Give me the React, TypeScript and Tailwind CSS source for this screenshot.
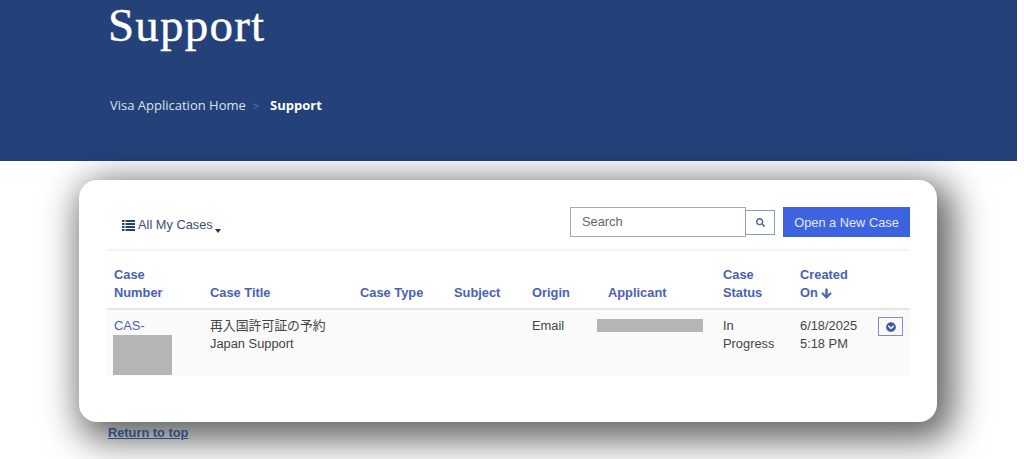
import { FaArrowDown, FaChevronCircleDown, FaSearch } from "react-icons/fa";

const sans = "font-['Liberation_Sans','Noto_Sans_CJK_JP',sans-serif]";

export default function App() {
  return (
    <div className={`w-[1024px] h-[459px] overflow-hidden bg-white ${sans}`}>
      <header className="w-[1017px] h-[161px] bg-[#24417a] pl-[108px] text-white">
        <h1 className="font-['Liberation_Serif',serif] text-[47px] leading-[50px] tracking-[1.2px] [-webkit-text-stroke:0.4px_white]">Support</h1>
        <nav className="flex items-center mt-[44px] pl-[2px] h-[24px] font-['Open_Sans',sans-serif] text-[13px]">
          <span className="text-[#dbe1ec]">Visa Application Home</span>
          <span className="ml-[7px] text-[#5f779f] text-[11px]">&gt;</span>
          <span className="ml-[11px] font-bold">Support</span>
        </nav>
      </header>

      <main className="pt-[19px]">
        <section className="ml-[79px] w-[858px] h-[242px] rounded-[18px] bg-white px-[28px] shadow-[8px_10px_36px_8px_rgba(0,0,0,0.62)] relative">
          <div className="h-[71px] flex items-start justify-between border-b-2 border-[#f3f3f3]">
            <div className="flex items-center mt-[36px] ml-[15px] text-[12.8px] leading-[18px] text-[#3d4f78]">
              <svg viewBox="0 0 13 11" className="w-[13px] h-[11px] text-[#24417a]" fill="currentColor">
                <rect x="0" y="0" width="2.5" height="2" />
                <rect x="3.5" y="0" width="9.5" height="2" />
                <rect x="0" y="3" width="2.5" height="2" />
                <rect x="3.5" y="3" width="9.5" height="2" />
                <rect x="0" y="6" width="2.5" height="2" />
                <rect x="3.5" y="6" width="9.5" height="2" />
                <rect x="0" y="9" width="2.5" height="2" />
                <rect x="3.5" y="9" width="9.5" height="2" />
              </svg>
              <span className="ml-[3px]">All My Cases</span>
              <span className="ml-[2px] mt-[11px] w-0 h-0 border-x-[3.5px] border-x-transparent border-t-[4px] border-t-[#333]" />
            </div>
            <div className="flex items-start mt-[27px] mr-[-1px] text-[12.8px]">
              <div className="w-[176px] h-[30px] border border-[#a4a9b3] bg-white pl-[11px] leading-[28px] text-[#666]">Search</div>
              <button className="w-[30px] h-[25px] mt-[3px] ml-[-1px] border border-[#8e9ab8] flex items-center justify-center text-[#4a62a8]">
                <FaSearch className="w-[9px] h-[9px]" />
              </button>
              <button className="w-[127px] h-[30px] ml-[8px] bg-[#3d63e0] text-[#e4e9fb] leading-[31px] text-center">Open a New Case</button>
            </div>
          </div>

          <table className="w-[803px] table-fixed border-collapse text-[12.85px] leading-[18px]">
            <colgroup>
              <col className="w-[96px]" />
              <col className="w-[150px]" />
              <col className="w-[94px]" />
              <col className="w-[78px]" />
              <col className="w-[76px]" />
              <col className="w-[115px]" />
              <col className="w-[77px]" />
              <col className="w-[117px]" />
            </colgroup>
            <thead>
              <tr className="h-[58px] border-b-2 border-[#e6e6e6] text-left text-[#4a62b0]">
                <th className="pl-[7px] align-bottom pb-[6px] font-bold">Case<br />Number</th>
                <th className="pl-[7px] align-bottom pb-[6px] font-bold">Case Title</th>
                <th className="pl-[7px] align-bottom pb-[6px] font-bold">Case Type</th>
                <th className="pl-[7px] align-bottom pb-[6px] font-bold">Subject</th>
                <th className="pl-[7px] align-bottom pb-[6px] font-bold">Origin</th>
                <th className="pl-[7px] align-bottom pb-[6px] font-bold">Applicant</th>
                <th className="pl-[7px] align-bottom pb-[6px] font-bold">Case<br />Status</th>
                <th className="pl-[7px] align-bottom pb-[6px] font-bold">
                  Created<br />
                  <span className="inline-flex items-center gap-[3px]">On <FaArrowDown className="w-[11px] h-[11px] stroke-[30px]" /></span>
                </th>
              </tr>
            </thead>
            <tbody>
              <tr className="h-[67px] bg-[#fafafa] text-[#444] align-top">
                <td className="pl-[7px] pt-[7px]">
                  <span className="block text-[#4a62b0]">CAS-</span>
                  <div className="w-[59px] h-[40px] ml-[-1px] bg-[#b5b5b5]" />
                </td>
                <td className="pl-[7px] pt-[7px]">再入国許可証の予約<br />Japan Support</td>
                <td />
                <td />
                <td className="pl-[7px] pt-[7px]">Email</td>
                <td className="pt-[9px]">
                  <div className="w-[106px] h-[13px] ml-[-4px] bg-[#b5b5b5]" />
                </td>
                <td className="pl-[7px] pt-[7px]">In<br />Progress</td>
                <td className="pl-[7px] pt-[7px]">
                  <div className="flex justify-between">
                    <span>6/18/2025<br />5:18 PM</span>
                    <button className="w-[25px] h-[19px] mr-[7px] border border-[#7f8fc0] flex items-center justify-center text-[#3f58a8]">
                      <FaChevronCircleDown className="w-[10px] h-[10px]" />
                    </button>
                  </div>
                </td>
              </tr>
            </tbody>
          </table>
        </section>

        <a className="relative block ml-[108px] mt-[2px] w-fit text-[12.8px] leading-[18px] font-bold underline text-[#2c4a78]">Return to top</a>
      </main>
    </div>
  );
}
